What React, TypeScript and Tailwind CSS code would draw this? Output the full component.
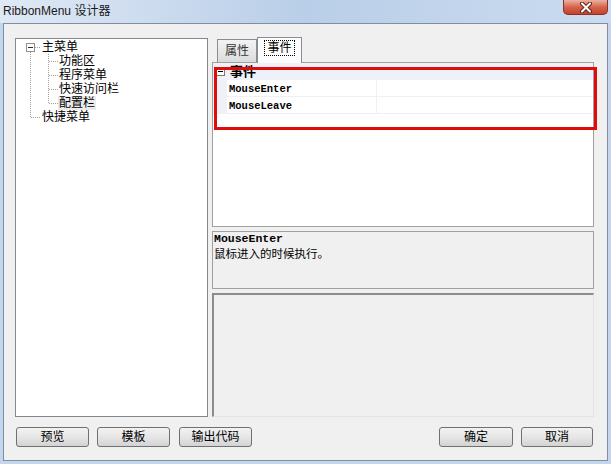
const cjk = "font-['Liberation_Sans','Noto_Sans_CJK_SC',sans-serif]";
const mono = "font-['Liberation_Mono','Noto_Sans_CJK_SC',monospace]";

const TreeLines = () => (
  <svg className="absolute inset-0 pointer-events-none" width="191" height="377">
    <g stroke="#a0a0a0" strokeDasharray="1 1" fill="none">
      <line x1="19" y1="8.5" x2="25" y2="8.5" />
      <line x1="14.5" y1="13" x2="14.5" y2="79" />
      <line x1="15" y1="78.5" x2="25" y2="78.5" />
      <line x1="32.5" y1="15" x2="32.5" y2="64" />
      <line x1="33" y1="22.5" x2="43" y2="22.5" />
      <line x1="33" y1="36.5" x2="43" y2="36.5" />
      <line x1="33" y1="50.5" x2="43" y2="50.5" />
      <line x1="33" y1="64.5" x2="43" y2="64.5" />
    </g>
    <rect x="10.5" y="4.5" width="8" height="8" fill="#fff" stroke="#919191" />
    <line x1="12" y1="8.5" x2="17" y2="8.5" stroke="#2d2d2d" />
  </svg>
);

const TreeRow = ({ label, child, selected }: { label: string; child?: boolean; selected?: boolean }) => (
  <div className={`h-[14px] leading-[14px] ${child ? "pl-[42px]" : "pl-[25px]"}`}>
    <span className={selected ? "bg-[#ebebeb] px-px" : "px-px"}>{label}</span>
  </div>
);

const Btn = ({ label, w = "w-[73px]" }: { label: string; w?: string }) => (
  <div
    className={`${w} h-[20px] rounded-[3px] border border-[#707070] bg-gradient-to-b from-[#f2f2f2] via-[#e6e6e6] to-[#d3d3d3] flex items-center justify-center text-[12px] text-black`}
  >
    {label}
  </div>
);

const PropRow = ({ name }: { name: string }) => (
  <div className="flex h-[17px] border-b border-[#f0f0f0]">
    <div className="w-[14px] bg-[#eef2f8]" />
    <div className={`w-[150px] border-r border-[#f0f0f0] pl-[2px] pt-[2px] leading-[14px] text-[10.5px] font-semibold ${mono} text-black`}>
      {name}
    </div>
    <div className="flex-1 bg-white" />
  </div>
);

export default function App() {
  return (
    <div className={`w-[611px] h-[464px] flex flex-col bg-[#c4d6ec] ${cjk}`}>
      {/* title bar */}
      <div className="h-[23px] flex items-start bg-gradient-to-r from-[#dfe9f5] via-[#b9cee8] to-[#cbdcf0]">
        <div className="pl-[3px] pt-[4px] text-[12px] leading-[14px] text-[#1a1a1a]">RibbonMenu 设计器</div>
        <div className="ml-auto mr-[3px] w-[45px] h-[15px] rounded-b-[5px] border border-t-0 border-[#8b3022] bg-gradient-to-b from-[#eab1a3] via-[#d4634d] to-[#c2432b] flex items-center justify-center">
          <svg width="14" height="11" viewBox="0 0 14 11">
            <path d="M3 1.5 L11 9.5 M11 1.5 L3 9.5" stroke="#6a2418" strokeWidth="4" strokeLinecap="round" />
            <path d="M3 1.5 L11 9.5 M11 1.5 L3 9.5" stroke="#ffffff" strokeWidth="2" strokeLinecap="round" />
          </svg>
        </div>
      </div>

      {/* client */}
      <div className="flex-1 mx-[3px] mb-[3px] border border-[#7f8ea3] bg-[#f0f0f0] pt-[13px] pl-[11px] pr-[13px] pb-[13px] flex flex-col">
        <div className="h-[380px] flex gap-[4px]">
          {/* tree */}
          <div className="relative mt-px w-[193px] h-[379px] border border-[#828790] bg-white text-[12px] text-black pt-px">
            <TreeLines />
            <TreeRow label="主菜单" />
            <TreeRow label="功能区" child />
            <TreeRow label="程序菜单" child />
            <TreeRow label="快速访问栏" child />
            <TreeRow label="配置栏" child selected />
            <TreeRow label="快捷菜单" />
          </div>

          {/* right column */}
          <div className="w-[382px] flex flex-col">
            <div className="h-[25px] flex items-end pl-[5px]">
              <div className="w-[40px] h-[23px] border border-b-0 border-[#898c95] bg-gradient-to-b from-[#f3f3f3] to-[#dcdcdc] text-[12px] text-[#333] flex items-center justify-center">
                属性
              </div>
              <div className="relative z-10 -mb-px w-[45px] h-[26px] border border-b-0 border-[#898c95] bg-[#fcfcfc] text-[12px] text-black flex items-start justify-center pt-[2px]">
                <span className="border border-dotted border-black px-[2px] leading-[14px]">事件</span>
              </div>
            </div>

            {/* property grid */}
            <div className="relative h-[165px] border border-[#a0a0a0] bg-white">
              <div className="flex h-[17px] bg-[#eef2f8] items-center">
                <svg className="ml-[3px]" width="9" height="9">
                  <rect x="0.5" y="0.5" width="8" height="8" fill="#fff" stroke="#7a7a7a" />
                  <line x1="2" y1="4.5" x2="7" y2="4.5" stroke="#000" />
                </svg>
                <span className="ml-[5px] text-[13px] font-bold leading-[16px] text-black">事件</span>
              </div>
              <PropRow name="MouseEnter" />
              <PropRow name="MouseLeave" />
              {/* annotation */}
              <div className="absolute left-[1px] top-[4px] w-[383px] h-[63px] border-[3px] border-[#e20b0b] pointer-events-none" />
            </div>

            {/* description */}
            <div className="mt-[4px] h-[58px] border border-[#a0a0a0] bg-[#f0f0f0] pl-[1px] pt-[1px]">
              <div className={`text-[11.5px] font-bold leading-[12px] ${mono} text-black`}>MouseEnter</div>
              <div className="mt-[2px] text-[11.5px] leading-[14px] text-black">鼠标进入的时候执行。</div>
            </div>

            {/* bottom panel */}
            <div className="mt-[4px] h-[124px] border-t-2 border-l-2 border-r border-b border-t-[#8c8c8c] border-l-[#8c8c8c] border-r-[#e3e3e3] border-b-[#e3e3e3] bg-[#f0f0f0]" />
          </div>
        </div>

        {/* buttons */}
        <div className="mt-[10px] flex pl-px pr-px">
          <Btn label="预览" />
          <div className="ml-[8px]">
            <Btn label="模板" />
          </div>
          <div className="ml-[9px]">
            <Btn label="输出代码" />
          </div>
          <div className="ml-auto">
            <Btn label="确定" w="w-[74px]" />
          </div>
          <div className="ml-[8px]">
            <Btn label="取消" w="w-[72px]" />
          </div>
        </div>
      </div>
    </div>
  );
}
